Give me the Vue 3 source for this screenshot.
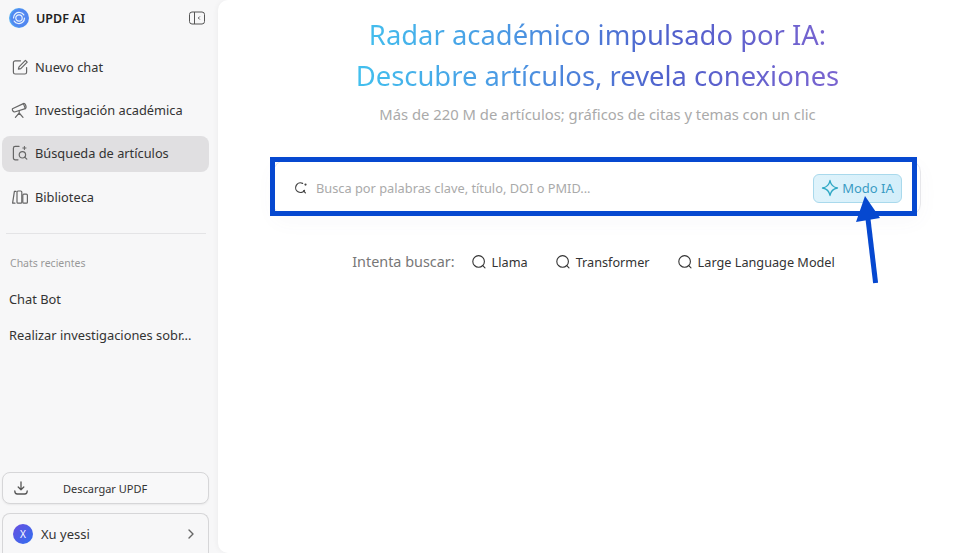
<script setup>
const nav = [
  { label: 'Nuevo chat', icon: 'edit' },
  { label: 'Investigación académica', icon: 'scope' },
  { label: 'Búsqueda de artículos', icon: 'search', active: true },
  { label: 'Biblioteca', icon: 'lib' },
]
const chats = ['Chat Bot', 'Realizar investigaciones sobr...']
const tries = ['Llama', 'Transformer', 'Large Language Model']
</script>

<template>
  <div class="app">
    <aside class="side">
      <div class="brand">
        <svg class="logo" viewBox="0 0 20 20" width="20" height="20">
          <defs>
            <radialGradient id="lg" cx="0.55" cy="0.5" r="0.6">
              <stop offset="0" stop-color="#5f8df2" />
              <stop offset="0.7" stop-color="#4f86f0" />
              <stop offset="1" stop-color="#58c4f6" />
            </radialGradient>
          </defs>
          <circle cx="10" cy="10" r="10" fill="url(#lg)" />
          <path d="M4.500 10c0-3.600 3-6 6.500-5.500 1.500.2 3 1.100 3.800 2.400" fill="none" stroke="#e6f3ff" stroke-width="1.200" stroke-linecap="round" />
          <path d="M15.500 10c0 3.600-3 6-6.500 5.500-1.500-.2-3-1.100-3.800-2.400" fill="none" stroke="#e6f3ff" stroke-width="1.200" stroke-linecap="round" />
          <circle cx="10" cy="10" r="3.200" fill="none" stroke="#e6f3ff" stroke-width="1.200" />
        </svg>
        <span class="brand-name">UPDF AI</span>
        <svg class="collapse" viewBox="0 0 16 14" width="16" height="14" fill="none" stroke="#555" stroke-width="1">
          <rect x="0.5" y="1" width="15" height="12" rx="2.5" />
          <path d="M5.5 1v12" />
          <path d="M10.800 5.500 9.300 7l1.500 1.500" />
        </svg>
      </div>

      <nav class="nav">
        <div v-for="n in nav" :key="n.label" class="nav-item" :class="{ active: n.active }">
          <svg class="nav-icon" viewBox="0 0 18 18" width="18" height="18" fill="none" stroke="#666" stroke-width="1.200" stroke-linecap="round" stroke-linejoin="round">
            <template v-if="n.icon === 'edit'">
              <path d="M9.500 2.800H4.200A1.800 1.800 0 0 0 2.400 4.600v9.600A1.800 1.800 0 0 0 4.200 16h9.600a1.800 1.800 0 0 0 1.800-1.800V9.500" />
              <path d="M14.400 2.400 16.200 4.200 9.800 10.600 7.400 11.200 8 8.800Z" />
            </template>
            <template v-else-if="n.icon === 'scope'">
              <path d="M1.400 7.800 12.400 2.600l1.900 5-10.700 3.400a2.600 2.600 0 0 1-2.200-3.200Z" />
              <path d="M12.400 2.600c1.700-1.200 3.700 3.800 1.900 5" />
              <path d="M8.200 10v2M8.200 12l-3.800 4.300M8.200 12l3.800 4.300" />
            </template>
            <template v-else-if="n.icon === 'search'">
              <path d="M8 2.400H4.200A1.800 1.800 0 0 0 2.400 4.200v9.800a1.800 1.800 0 0 0 1.800 1.800h2.800" />
              <circle cx="11.400" cy="10.800" r="3.200" />
              <path d="m13.700 13.100 2.100 2.100" />
              <path d="M13.400 2.400v3.200M11.800 4h3.200" stroke-width="1" />
            </template>
            <template v-else>
              <path d="M5 3.400H3.400L1.600 15.200H4" />
              <rect x="6" y="3" width="4.800" height="12.200" rx="1" />
              <rect x="11.800" y="6.200" width="4.600" height="9" rx="1" />
            </template>
          </svg>
          <span>{{ n.label }}</span>
        </div>
      </nav>

      <div class="divider"></div>
      <div class="recent-title">Chats recientes</div>
      <div v-for="c in chats" :key="c" class="chat">{{ c }}</div>

      <div class="side-bottom">
        <button class="download">
          <svg viewBox="0 0 16 16" width="16" height="16" fill="none" stroke="#555" stroke-width="1.300" stroke-linecap="round" stroke-linejoin="round">
            <path d="M8 2v7.500M5.200 7 8 9.700 10.800 7" />
            <path d="M1.800 11c0 2.200 1 3 2.500 3h7.400c1.500 0 2.500-.8 2.500-3" />
          </svg>
          <span>Descargar UPDF</span>
        </button>
        <div class="user">
          <span class="avatar">X</span>
          <span class="user-name">Xu yessi</span>
          <svg viewBox="0 0 8 12" width="8" height="12" fill="none" stroke="#666" stroke-width="1.400" stroke-linecap="round" stroke-linejoin="round">
            <path d="M2 2l4 4-4 4" />
          </svg>
        </div>
      </div>
    </aside>

    <main class="main">
      <h1 class="title">Radar académico impulsado por IA:<br />Descubre artículos, revela conexiones</h1>
      <p class="sub">Más de 220 M de artículos; gráficos de citas y temas con un clic</p>

      <div class="search">
        <svg class="search-ic" viewBox="0 0 14 14" width="14" height="14" fill="none" stroke="#444" stroke-width="1.200" stroke-linecap="round">
          <path d="M8.600 2.400A4.800 4.800 0 1 0 10.500 9.300" />
          <path d="m9.600 9.800 1.800 2" />
          <circle cx="11.500" cy="3.600" r="1.100" fill="#444" stroke="none" />
        </svg>
        <span class="placeholder">Busca por palabras clave, título, DOI o PMID...</span>
        <button class="mode">
          <svg viewBox="0 0 18 18" width="18" height="18" fill="none" stroke="#2fa8c4" stroke-width="1.300" stroke-linejoin="round">
            <path d="M9 1.500c.8 4.400 3 6.700 7.500 7.500-4.500.8-6.700 3.100-7.500 7.500-.8-4.400-3-6.700-7.500-7.500 4.500-.8 6.700-3.100 7.500-7.500Z" />
          </svg>
          <span>Modo IA</span>
        </button>
        <div class="annot-box"></div>
      </div>

      <div class="tries">
        <span class="tries-label">Intenta buscar:</span>
        <span v-for="t in tries" :key="t" class="try">
          <svg viewBox="0 0 16 16" width="16" height="16" fill="none" stroke="#333" stroke-width="1.100" stroke-linecap="round">
            <circle cx="7.600" cy="7.400" r="5.800" />
            <path d="m11.800 11.600 2.200 2.200" />
          </svg>
          {{ t }}
        </span>
      </div>

      <svg class="annot-arrow" viewBox="0 0 40 92" width="40" height="92">
        <path d="M28.600 88 21 24" stroke="#0648d0" stroke-width="5" fill="none" />
        <path d="M18 1 9 27 33 23Z" fill="#0648d0" />
      </svg>
    </main>
  </div>
</template>

<style>
html, body { margin: 0; padding: 0; background: #f7f7f8; }
</style>

<style scoped>
.app {
  width: 957px;
  height: 553px;
  display: flex;
  overflow: hidden;
  background: #f7f7f8;
  font-family: "Noto Sans", "Liberation Sans", sans-serif;
  color: #333;
}
.side {
  width: 218px;
  flex: none;
  display: flex;
  flex-direction: column;
  padding: 0 9px 0 2px;
  box-sizing: border-box;
  position: relative;
}
.brand {
  height: 36px;
  display: flex;
  align-items: center;
  padding-left: 7px;
  gap: 7px;
}
.logo { flex: none; }
.brand-name { font-size: 12.500px; font-weight: 600; color: #222; }
.collapse { margin-left: auto; margin-right: 4px; }
.nav { display: flex; flex-direction: column; gap: 7px; margin-top: 13px; padding-top: 1px; }
.nav-item {
  height: 36px;
  box-sizing: border-box;
  border-radius: 8px;
  display: flex;
  align-items: center;
  gap: 6px;
  padding: 0 0 2px 9px;
  font-size: 12.800px;
  color: #333;
}
.nav-item:last-child { padding-bottom: 0; }
.nav-item.active { background: #e0dfe1; }
.nav-icon { flex: none; }
.divider { height: 1px; background: #e4e4e6; margin: 18px 3px 0 4px; }
.recent-title { font-size: 10.500px; color: #999; margin: 22px 0 0 8px; line-height: 14px; }
.chat { font-size: 12.850px; color: #333; margin-left: 7px; line-height: 18px; margin-top: 18px; white-space: nowrap; }
.recent-title + .chat { margin-top: 20px; }
.side-bottom { margin-top: auto; display: flex; flex-direction: column; gap: 9px; }
.download {
  height: 32px;
  display: flex;
  align-items: center;
  border: 1px solid #d6d6d8;
  border-radius: 8px;
  background: #f8f8f9;
  padding: 0 0 0 10px;
  font: inherit;
  font-size: 11px;
  color: #333;
  box-shadow: 0 1px 2px rgba(0, 0, 0, 0.06);
}
.download span { margin-left: 34px; }
.user {
  height: 40px;
  box-sizing: border-box;
  display: flex;
  align-items: center;
  border: 1px solid #d6d6d8;
  border-bottom: none;
  border-radius: 8px 8px 0 0;
  padding: 1px 13px 0 10px;
  font-size: 13px;
  color: #333;
}
.avatar {
  width: 20px;
  height: 20px;
  border-radius: 50%;
  background: linear-gradient(135deg, #6a4fe0, #2f6ff0);
  color: #fff;
  font-size: 10px;
  display: flex;
  align-items: center;
  justify-content: center;
  margin-right: 8px;
}
.user-name { flex: 1; }
.main {
  flex: 1;
  position: relative;
  background: #fff;
  border-radius: 10px 0 0 10px;
  box-shadow: -2px 0 4px rgba(0, 0, 0, 0.03);
  height: 553px;
  display: flex;
  flex-direction: column;
  align-items: center;
  padding: 14px 0 0 20px;
  box-sizing: border-box;
}
.title {
  margin: 0;
  width: fit-content;
  text-align: center;
  font-size: 27.400px;
  font-weight: 400;
  line-height: 41px;
  background: linear-gradient(90deg, #42c0ee 0%, #4a9ae4 30%, #5060cc 65%, #7a64d0 100%);
  -webkit-background-clip: text;
  background-clip: text;
  color: transparent;
}
.sub { margin: 8px 0 0; font-size: 14.800px; line-height: 21px; color: #aaa; }
.search {
  position: relative;
  width: 648px;
  height: 56px;
  margin-top: 35px;
  margin-left: -1px;
  border: 1px solid #e6e6ea;
  border-radius: 12px;
  box-sizing: border-box;
  display: flex;
  align-items: center;
  padding: 0 18px 0 20px;
  box-shadow: 0 6px 20px rgba(90, 90, 160, 0.04);
}
.search-ic { flex: none; }
.placeholder { margin-left: 8px; font-size: 12.800px; color: #aaa; }
.mode {
  margin-left: auto;
  width: 89px;
  height: 29px;
  border: 1px solid #a9d9ec;
  border-radius: 6px;
  background: linear-gradient(90deg, #dff3fb, #d3eefa);
  display: flex;
  align-items: center;
  justify-content: center;
  gap: 3px;
  padding: 0;
  font: inherit;
  font-size: 13px;
  color: #3a9cc4;
}
.annot-box {
  position: absolute;
  left: -4px;
  top: -4px;
  width: 647px;
  height: 59px;
  box-sizing: border-box;
  border: 5px solid #0648d0;
}
.tries {
  display: flex;
  align-items: center;
  margin-top: 36px;
  margin-left: -8px;
  font-size: 12.700px;
  color: #333;
  line-height: 20px;
}
.tries-label { font-size: 14.400px; color: #777; margin-right: 16px; }
.try { display: flex; align-items: center; gap: 5px; margin-right: 27px; }
.try:last-child { margin-right: 0; }
.annot-arrow { position: absolute; left: 629px; top: 195px; }
</style>
